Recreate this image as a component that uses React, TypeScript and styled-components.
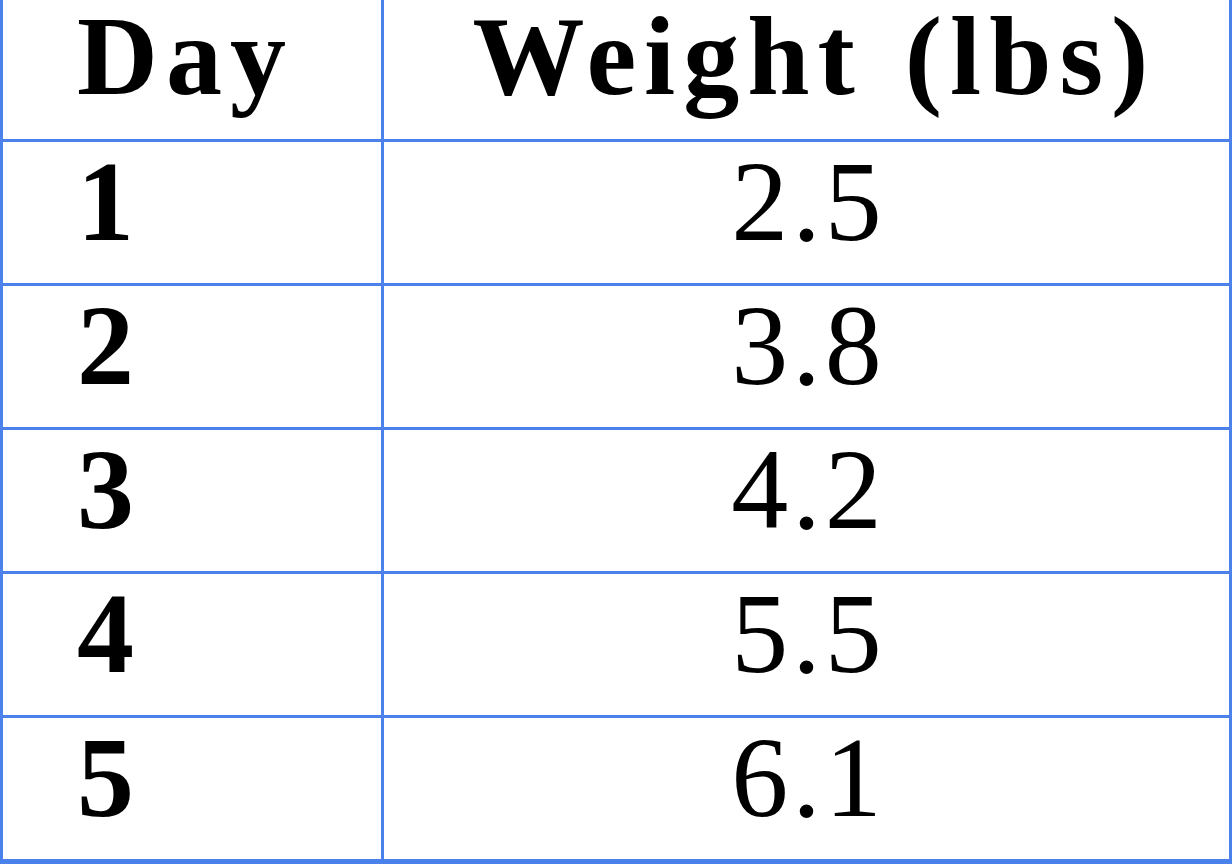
import * as React from "react";
import styled, { createGlobalStyle } from "styled-components";

const GlobalStyle = createGlobalStyle`
    html, body {
        margin: 0;
        padding: 0;
        background: #ffffff;
    }
`;

const rows = [
    { day: "1", weight: "2.5" },
    { day: "2", weight: "3.8" },
    { day: "3", weight: "4.2" },
    { day: "4", weight: "5.5" },
    { day: "5", weight: "6.1" },
];

const Grid = styled.div`
    width: 1232px;
    height: 864px;
    box-sizing: border-box;
    display: grid;
    grid-template-columns: 378px 1fr;
    grid-template-rows: 139px repeat(5, 141px);
    gap: 3px;
    padding: 0 3px 3px 3px;
    background: #4b81ec;
    font-family: "Liberation Serif", "Times New Roman", serif;
    color: #000000;
`;

const Cell = styled.div<{ $align: "left" | "center"; $bold?: boolean; $header?: boolean }>`
    background: #ffffff;
    display: flex;
    align-items: flex-start;
    justify-content: ${(p) => (p.$align === "left" ? "flex-start" : "center")};
    padding-left: ${(p) => (p.$align === "left" ? "74px" : p.$header ? "16px" : "4px")};
    padding-top: ${(p) => (p.$header ? "0" : "3px")};
    box-sizing: border-box;
    font-size: ${(p) => (p.$header ? "112px" : "114px")};
    font-weight: ${(p) => (p.$bold ? 700 : 400)};
    letter-spacing: ${(p) => (p.$header ? "8px" : "4px")};
    word-spacing: ${(p) => (p.$header ? "6px" : "0")};
    line-height: 1;
    white-space: nowrap;
`;

export default function App() {
    return (
        <>
            <GlobalStyle />
            <Grid>
                <Cell $align="left" $bold $header>
                    Day
                </Cell>
                <Cell $align="center" $bold $header>
                    Weight (lbs)
                </Cell>
                {rows.map((r) => (
                    <React.Fragment key={r.day}>
                        <Cell $align="left" $bold>
                            {r.day}
                        </Cell>
                        <Cell $align="center">{r.weight}</Cell>
                    </React.Fragment>
                ))}
            </Grid>
        </>
    );
}
